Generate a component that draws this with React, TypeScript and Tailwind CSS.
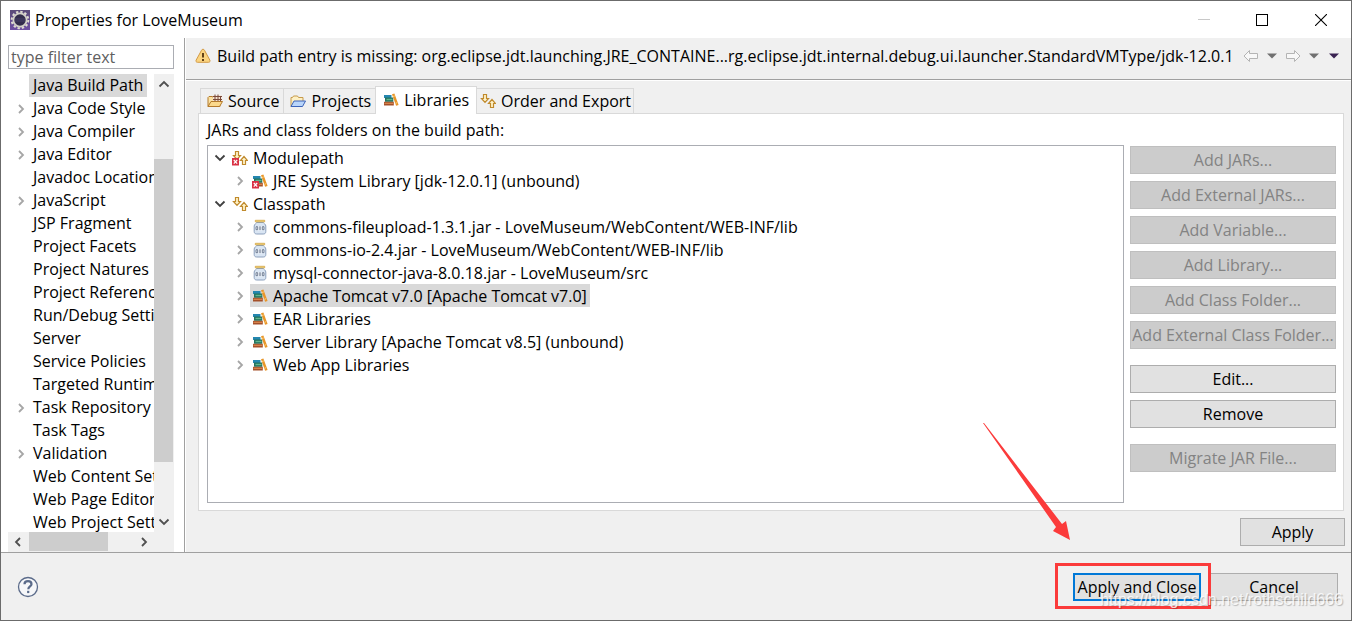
import type { ReactNode } from 'react';

type PageItem = { name: string; expandable?: boolean; selected?: boolean };

const pages: PageItem[] = [
  { name: 'Java Build Path', selected: true },
  { name: 'Java Code Style', expandable: true },
  { name: 'Java Compiler', expandable: true },
  { name: 'Java Editor', expandable: true },
  { name: 'Javadoc Location' },
  { name: 'JavaScript', expandable: true },
  { name: 'JSP Fragment' },
  { name: 'Project Facets' },
  { name: 'Project Natures' },
  { name: 'Project References' },
  { name: 'Run/Debug Settings' },
  { name: 'Server' },
  { name: 'Service Policies' },
  { name: 'Targeted Runtimes' },
  { name: 'Task Repository', expandable: true },
  { name: 'Task Tags' },
  { name: 'Validation', expandable: true },
  { name: 'Web Content Settings' },
  { name: 'Web Page Editor' },
  { name: 'Web Project Settings' },
];

function Chevron({ dir, className = '' }: { dir: 'right' | 'left' | 'up' | 'down'; className?: string }) {
  const paths = {
    right: 'M4 2l4 4-4 4',
    left: 'M8 2L4 6l4 4',
    up: 'M1.5 8.500L6 4l4.500 4.500',
    down: 'M1.5 3.500L6 8l4.500-4.500',
  };
  return (
    <svg viewBox="0 0 12 12" className={`size-3 shrink-0 ${className}`} fill="none" stroke="currentColor" strokeWidth="1.8">
      <path d={paths[dir]} />
    </svg>
  );
}

function EclipseIcon() {
  return (
    <svg viewBox="0 0 20 20" className="size-5 shrink-0">
      <defs>
        <linearGradient id="eclipse" x1="0" y1="0" x2="0" y2="1">
          <stop offset="0" stopColor="#5a4a78" />
          <stop offset="1" stopColor="#6f4fa3" />
        </linearGradient>
      </defs>
      <rect width="20" height="20" fill="url(#eclipse)" />
      <circle cx="10" cy="10" r="8.300" fill="none" stroke="#dedbd2" strokeWidth="2" strokeDasharray="2.4 1.946" />
      <circle cx="10" cy="10" r="6.600" fill="#332c4c" stroke="#d3d0c8" strokeWidth="1.800" />
      <path d="M5 9h10M5 11h10" stroke="#4d4470" strokeWidth="0.8" />
    </svg>
  );
}

function WarningIcon() {
  return (
    <svg viewBox="0 0 16 16" className="size-4 shrink-0">
      <path d="M8 1.2c.7 0 1.100.4 1.500 1.100l5.300 9.700c.6 1.300.1 2.300-1.300 2.300h-11c-1.400 0-1.900-1-1.300-2.300l5.300-9.700C6.900 1.600 7.300 1.200 8 1.200z" fill="#fbd480" stroke="#d29a45" />
      <path d="M8 5v4.500" stroke="#5b3a12" strokeWidth="1.900" />
      <path d="M8 11v1.900" stroke="#5b3a12" strokeWidth="1.900" />
    </svg>
  );
}

function SourceIcon() {
  return (
    <svg viewBox="0 0 16 16" className="size-4 shrink-0">
      <path d="M1 13.500V4.500l1-1h3.500l1 1.500H13v8.500z" fill="#fbe3a4" stroke="#b47a2b" />
      <path d="M6 2.500h8.500v6H6z" fill="#f6e2cf" />
      <path d="M8 1.500v7M11 1.500v7M13.500 3v5M6 3.500h9M6 6.500h9" stroke="#7b4a3a" />
      <path d="M1 13.500l3-5h11.500l-3 5z" fill="#fbd98c" stroke="#b47a2b" />
    </svg>
  );
}

function ProjectsIcon() {
  return (
    <svg viewBox="0 0 16 16" className="size-4 shrink-0">
      <path d="M1 13.500V4.500h1.500l1-1.500h4l1 1.500H13v5z" fill="#fdf0c4" stroke="#c79a4a" />
      <path d="M1 13.500l3-5.500h11.500l-3 5.500z" fill="#b9d5fa" stroke="#3c63b8" />
    </svg>
  );
}

function ErrorMark() {
  return (
    <>
      <path d="M0 8h7v7.500H0z" fill="#d93245" />
      <path d="M1.800 10l3.400 3.700M5.200 10l-3.400 3.700" stroke="#fff" strokeWidth="1.200" />
    </>
  );
}

function BooksIcon({ error = false }: { error?: boolean }) {
  return (
    <svg viewBox="0 0 16 16" className="size-4 shrink-0">
      <path d="M1 3h7.500v3H1z" fill="#2587b0" />
      <path d="M2 5.500h8.300v4.300H2z" fill="#23735e" />
      <path d="M3.500 6.800h6v1.400h-6z" fill="#62b68e" />
      <path d="M1 9.800h9.800v3.700H1z" fill="#a4502a" />
      <path d="M1.500 10.700h8.800v1.300H1.500z" fill="#d5824a" />
      <path d="M9 2.300l2.400-.9L15.600 12.900l-2.500.8z" fill="#e8962a" />
      <path d="M10 4.500l1.800-.6M12.400 11.300l1.800-.6" stroke="#fbd27c" />
      {error && <ErrorMark />}
    </svg>
  );
}

function OrderIcon({ error = false }: { error?: boolean }) {
  return (
    <svg viewBox="0 0 16 16" className="size-4 shrink-0">
      <path d="M3.500 1.500h3v4h2L5 9.300 1.500 5.500h2z" fill="#fff3c9" stroke="#c08a2c" strokeWidth="1.200" />
      <path d="M10.500 14.500h3v-4h2L12 6.500 8.500 10.500h2z" fill="#fff3c9" stroke="#c08a2c" strokeWidth="1.200" />
      {error && <ErrorMark />}
    </svg>
  );
}

function JarIcon() {
  return (
    <svg viewBox="0 0 16 16" className="size-4 shrink-0">
      <path d="M4.500 3.500h7c0 1.200 2.300 1.500 2.300 3.500v5.500c0 1.700-1 2.500-2.500 2.500H4.700c-1.500 0-2.500-.8-2.500-2.500V7c0-2 2.300-2.300 2.300-3.500z" fill="#d9e5f3" stroke="#8b9fbc" />
      <path d="M3.500 7h9v4.500h-9z" fill="#eff4fa" />
      <path d="M3.300 1.300h9.400v1.500H3.300z" fill="#fbe59a" stroke="#d0a03a" strokeWidth="0.800" />
      <path d="M4 7.700h1.700v3H4zM10.300 7.700H12v3h-1.700z" fill="none" stroke="#56657f" strokeWidth="0.800" />
      <path d="M8 7.300v3.800" stroke="#56657f" />
    </svg>
  );
}

function NavArrow({ flip = false }: { flip?: boolean }) {
  return (
    <svg viewBox="0 0 16 14" className={`h-3.5 w-4 ${flip ? 'rotate-180' : ''}`} fill="#f8f8f8" stroke="#b4b4b4">
      <path d="M1 7l5.500-5.500V4.500H14.500v5H6.500v3z" />
    </svg>
  );
}

function Caret({ className }: { className: string }) {
  return (
    <svg viewBox="0 0 10 6" className={`h-1.5 w-2.5 ${className}`} fill="currentColor">
      <path d="M0 .5h10L5 5.500z" />
    </svg>
  );
}

type TreeRowProps = { label: string; icon: ReactNode; open?: boolean; nested?: boolean; selected?: boolean };

function TreeRow({ label, icon, open = false, nested = false, selected = false }: TreeRowProps) {
  return (
    <li role="treeitem" aria-expanded={open} aria-selected={selected} className={`flex h-[23px] items-center gap-1 ${nested ? 'pl-[26px]' : 'pl-1.5'}`}>
      <Chevron dir={open ? 'down' : 'right'} className={open ? 'text-[#404040]' : 'text-[#a6a6a6]'} />
      <span className={`flex h-full items-center gap-[5px] pr-[3px] pl-0.5 whitespace-nowrap ${selected ? 'bg-[#d9d9d9]' : ''}`}>
        {icon}
        {label}
      </span>
    </li>
  );
}

function Tab({ label, icon, active = false }: { label: string; icon: ReactNode; active?: boolean }) {
  return (
    <button
      type="button"
      role="tab"
      aria-selected={active}
      className={
        active
          ? 'relative -mr-px -mb-px -ml-px flex h-7 items-center gap-[5px] border border-b-0 border-[#d9d9d9] bg-white px-[7px] pb-0.5'
          : 'flex h-[25px] items-center gap-[5px] border-t border-r border-[#d9d9d9] pr-1 pl-1.5 first:border-l last:pr-0.5 last:pl-1'
      }
    >
      {icon}
      {label}
    </button>
  );
}

function DialogButton({ label, disabled = false, className = '' }: { label: string; disabled?: boolean; className?: string }) {
  return (
    <button
      type="button"
      disabled={disabled}
      className={`h-7 border text-center whitespace-nowrap ${
        disabled ? 'border-[#bfbfbf] bg-[#cccccc] text-[#838383]' : 'border-[#adadad] bg-[#e1e1e1] text-black'
      } ${className}`}
    >
      {label}
    </button>
  );
}

function Sidebar() {
  return (
    <aside className="flex w-[184px] shrink-0 flex-col border-r border-[#a0a0a0] bg-white pt-[7px] pr-[10px] pl-[7px]">
      <input
        type="text"
        aria-label="Filter"
        placeholder="type filter text"
        className="h-6 w-full shrink-0 border border-[#abadb3] px-0.5 outline-none placeholder:text-[#5f5f5f]"
      />
      <div className="mt-[5px] flex min-h-0 flex-1">
        <ul role="tree" className="min-w-0 flex-1 overflow-hidden">
          {pages.map((page) => (
            <li key={page.name} role="treeitem" aria-selected={!!page.selected} className="flex h-[23px] items-center pl-[7px]">
              <span className="flex w-3.5 shrink-0">
                {page.expandable && <Chevron dir="right" className="text-[#a6a6a6]" />}
              </span>
              <span className={`h-full px-1 leading-[23px] whitespace-nowrap ${page.selected ? 'bg-[#d9d9d9]' : ''}`}>{page.name}</span>
            </li>
          ))}
        </ul>
        <div className="flex w-5 shrink-0 flex-col bg-[#f0f0f0] text-[#505050]">
          <button type="button" aria-label="Scroll up" className="flex h-5 items-center justify-center">
            <Chevron dir="up" />
          </button>
          <div className="flex-[65]" />
          <div className="mr-px flex-[303] bg-[#cdcdcd]" />
          <div className="flex-[50]" />
          <button type="button" aria-label="Scroll down" className="flex h-5 items-center justify-center">
            <Chevron dir="down" />
          </button>
        </div>
      </div>
      <div className="flex h-5 shrink-0 bg-[#f0f0f0] pr-5 text-[#505050]">
        <button type="button" aria-label="Scroll left" className="flex w-5 items-center justify-center">
          <Chevron dir="left" />
        </button>
        <div className="mb-px ml-px flex-[78] bg-[#cdcdcd]" />
        <div className="flex-[26]" />
        <button type="button" aria-label="Scroll right" className="flex w-5 items-center justify-center">
          <Chevron dir="right" />
        </button>
      </div>
    </aside>
  );
}

function Libraries() {
  return (
    <div className="mr-[7px] ml-3 flex min-h-0 flex-1 flex-col border border-[#d9d9d9] bg-white pr-[7px] pb-[7px] pl-2">
      <p className="h-[31px] leading-8">JARs and class folders on the build path:</p>
      <div className="flex min-h-0 flex-1 gap-1.5">
        <ul role="tree" className="min-w-0 flex-1 border border-[#abadb3]">
          <TreeRow label="Modulepath" icon={<OrderIcon error />} open />
          <TreeRow label="JRE System Library [jdk-12.0.1] (unbound)" icon={<BooksIcon error />} nested />
          <TreeRow label="Classpath" icon={<OrderIcon />} open />
          <TreeRow label="commons-fileupload-1.3.1.jar - LoveMuseum/WebContent/WEB-INF/lib" icon={<JarIcon />} nested />
          <TreeRow label="commons-io-2.4.jar - LoveMuseum/WebContent/WEB-INF/lib" icon={<JarIcon />} nested />
          <TreeRow label="mysql-connector-java-8.0.18.jar - LoveMuseum/src" icon={<JarIcon />} nested />
          <TreeRow label="Apache Tomcat v7.0 [Apache Tomcat v7.0]" icon={<BooksIcon />} nested selected />
          <TreeRow label="EAR Libraries" icon={<BooksIcon />} nested />
          <TreeRow label="Server Library [Apache Tomcat v8.5] (unbound)" icon={<BooksIcon />} nested />
          <TreeRow label="Web App Libraries" icon={<BooksIcon />} nested />
        </ul>
        <div className="flex w-[206px] shrink-0 flex-col gap-[7px] pt-px">
          <DialogButton label="Add JARs..." disabled />
          <DialogButton label="Add External JARs..." disabled />
          <DialogButton label="Add Variable..." disabled />
          <DialogButton label="Add Library..." disabled />
          <DialogButton label="Add Class Folder..." disabled />
          <DialogButton label="Add External Class Folder..." disabled />
          <DialogButton label="Edit..." className="mt-[9px]" />
          <DialogButton label="Remove" />
          <DialogButton label="Migrate JAR File..." disabled className="mt-[9px]" />
        </div>
      </div>
    </div>
  );
}

export default function App() {
  return (
    <div className="flex h-screen flex-col overflow-hidden border border-[#6b6b6b] bg-[#f0f0f0] font-['Open_Sans',sans-serif] text-[16px] leading-5 text-black">
      <header className="flex h-[37px] shrink-0 items-center bg-white pl-[9px]">
        <EclipseIcon />
        <h1 className="ml-[5px] flex-1">Properties for LoveMuseum</h1>
        <button type="button" aria-label="Minimize" className="flex h-full w-[58px] items-center justify-center">
          <span className="h-px w-3 bg-[#c8c8c8]" />
        </button>
        <button type="button" aria-label="Maximize" className="flex h-full w-[58px] items-center justify-center">
          <span className="size-3 border border-black" />
        </button>
        <button type="button" aria-label="Close" className="flex h-full w-[60px] items-center justify-center">
          <svg viewBox="0 0 12 12" className="size-3" stroke="#000" strokeWidth="1.1">
            <path d="M0 0l12 12M12 0L0 12" />
          </svg>
        </button>
      </header>

      <div className="flex min-h-0 flex-1">
        <Sidebar />
        <main className="flex min-w-0 flex-1 flex-col border-l border-white">
          <div className="flex h-[42px] shrink-0 items-center border-b border-[#a0a0a0] pr-3 pb-1.5 pl-[9px]">
            <WarningIcon />
            <p className="ml-1.5 flex-1 whitespace-nowrap">
              Build path entry is missing: org.eclipse.jdt.launching.JRE_CONTAINE...rg.eclipse.jdt.internal.debug.ui.launcher.StandardVMType/jdk-12.0.1
            </p>
            <div className="flex items-center gap-2">
              <button type="button" aria-label="Back">
                <NavArrow />
              </button>
              <button type="button" aria-label="Back history">
                <Caret className="text-[#707070]" />
              </button>
              <button type="button" aria-label="Forward">
                <NavArrow flip />
              </button>
              <button type="button" aria-label="Forward history">
                <Caret className="text-[#707070]" />
              </button>
              <button type="button" aria-label="View menu" className="ml-0.5">
                <Caret className="text-[#3a2352]" />
              </button>
            </div>
          </div>

          <div role="tablist" className="flex h-[33px] shrink-0 items-end border-t border-white pl-3.5">
            <Tab label="Source" icon={<SourceIcon />} />
            <Tab label="Projects" icon={<ProjectsIcon />} />
            <Tab label="Libraries" icon={<BooksIcon />} active />
            <Tab label="Order and Export" icon={<OrderIcon />} />
          </div>
          <Libraries />
          <div className="flex shrink-0 justify-end pt-[7px] pr-1.5 pb-1.5">
            <DialogButton label="Apply" className="w-[105px]" />
          </div>
        </main>
      </div>

      <footer className="relative flex h-[68px] shrink-0 items-center justify-end border-t border-[#a0a0a0] pt-px pr-[13px] pl-4">
        <button type="button" aria-label="Help" className="mr-auto">
          <svg viewBox="0 0 22 22" className="size-[22px]" fill="none" stroke="#5b6b8a">
            <circle cx="11" cy="11" r="9.500" fill="#f6f7f9" strokeWidth="1.300" />
            <path d="M7.500 8.300C7.500 6.300 9 5.200 11 5.200s3.500 1.200 3.500 3c0 2.200-3.200 2.400-3.200 5" strokeWidth="2.200" />
            <path d="M11.200 14.800v2.300" strokeWidth="2.200" />
          </svg>
        </button>
        <div className="relative mr-[9px] flex">
          <button type="button" className="h-7 w-32 border-2 border-[#0078d7] bg-[#e1e1e1] whitespace-nowrap">
            Apply and Close
          </button>
          <svg viewBox="0 0 88 118" className="pointer-events-none absolute right-[130px] bottom-[60px] h-[118px] w-[88px]">
            <path d="M0 0L73 104l-3 4 17 9-4-19-4 3L1 0z" fill="#fb3b3b" />
          </svg>
          <span className="pointer-events-none absolute -top-2.5 -right-2.5 -bottom-2 -left-[18px] z-10 border-3 border-[#fb3b3b]" />
        </div>
        <DialogButton label="Cancel" className="w-32" />
        <span className="pointer-events-none absolute right-2 bottom-2 z-20 font-['Liberation_Sans',sans-serif] text-base text-white/80 [text-shadow:1px_1px_1px_rgba(0,0,0,0.25)]">
          https://blog.csdn.net/rothschild666
        </span>
      </footer>
    </div>
  );
}
